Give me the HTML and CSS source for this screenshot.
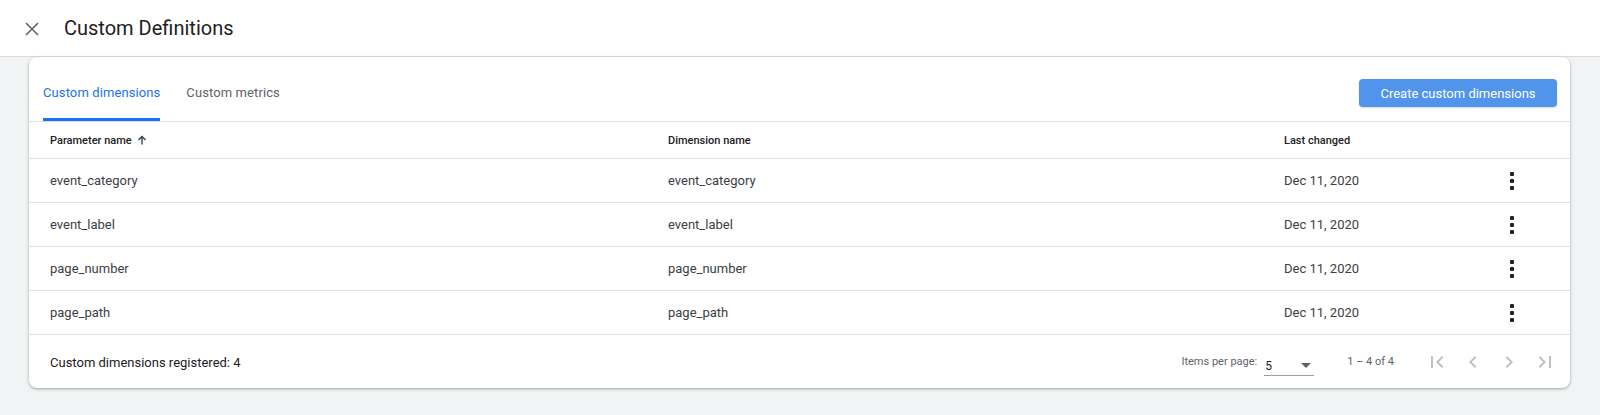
FILE: index.html
```html
<!DOCTYPE html>
<html>
<head>
<meta charset="utf-8">
<link rel="stylesheet" href="styles.css">
</head>
<body>
<header class="topbar">
  <button class="close" aria-label="Close">
    <svg width="14" height="14" viewBox="0 0 14 14"><path d="M1 1L13 13M13 1L1 13" stroke="#5f6368" stroke-width="1.6" fill="none"/></svg>
  </button>
  <h1 class="title">Custom Definitions</h1>
</header>
<main class="content">
  <section class="card">
    <div class="tabbar">
      <div class="tabs">
        <div class="tab active"><span>Custom dimensions</span></div>
        <div class="tab"><span>Custom metrics</span></div>
      </div>
      <button class="primary">Create custom dimensions</button>
    </div>
    <div class="table">
      <div class="row head">
        <div class="c1">Parameter name <svg class="sort" width="10" height="10" viewBox="0 0 10 10"><path d="M5 9.5V1.5M1.5 5L5 1.5L8.5 5" stroke="#3c4043" stroke-width="1.4" fill="none"/></svg></div>
        <div class="c2">Dimension name</div>
        <div class="c3">Last changed</div>
        <div class="c4"></div>
      </div>
      <div class="row">
        <div class="c1">event_category</div>
        <div class="c2">event_category</div>
        <div class="c3">Dec 11, 2020</div>
        <div class="c4"><span class="kebab"><i></i><i></i><i></i></span></div>
      </div>
      <div class="row">
        <div class="c1">event_label</div>
        <div class="c2">event_label</div>
        <div class="c3">Dec 11, 2020</div>
        <div class="c4"><span class="kebab"><i></i><i></i><i></i></span></div>
      </div>
      <div class="row">
        <div class="c1">page_number</div>
        <div class="c2">page_number</div>
        <div class="c3">Dec 11, 2020</div>
        <div class="c4"><span class="kebab"><i></i><i></i><i></i></span></div>
      </div>
      <div class="row">
        <div class="c1">page_path</div>
        <div class="c2">page_path</div>
        <div class="c3">Dec 11, 2020</div>
        <div class="c4"><span class="kebab"><i></i><i></i><i></i></span></div>
      </div>
    </div>
    <div class="footer">
      <div class="count">Custom dimensions registered: 4</div>
      <div class="paginator">
        <span class="ipp">Items per page:</span>
        <div class="select"><span>5</span><svg width="10" height="5" viewBox="0 0 10 5"><path d="M0 0H10L5 5Z" fill="#5f6368"/></svg></div>
        <span class="range">1 – 4 of 4</span>
        <div class="navs">
          <span class="nav"><svg width="24" height="24" viewBox="0 0 24 24"><path d="M18.41 16.59L13.82 12l4.59-4.59L17 6l-6 6 6 6zM6 6h2v12H6z" fill="#bdc1c6"/></svg></span>
          <span class="nav"><svg width="24" height="24" viewBox="0 0 24 24"><path d="M15.41 7.41L14 6l-6 6 6 6 1.41-1.41L10.83 12z" fill="#bdc1c6"/></svg></span>
          <span class="nav"><svg width="24" height="24" viewBox="0 0 24 24"><path d="M10 6L8.59 7.41 13.17 12l-4.58 4.59L10 18l6-6z" fill="#bdc1c6"/></svg></span>
          <span class="nav"><svg width="24" height="24" viewBox="0 0 24 24"><path d="M5.59 7.41L10.18 12l-4.59 4.59L7 18l6-6-6-6zM16 6h2v12h-2z" fill="#bdc1c6"/></svg></span>
        </div>
      </div>
    </div>
  </section>
</main>
</body>
</html>
```

FILE: styles.css
```css
* { box-sizing: border-box; }
html, body { margin: 0; padding: 0; }
body {
  background: #f1f3f4;
  font-family: Roboto, "Liberation Sans", Arial, sans-serif;
  color: #3c4043;
  height: 415px;
  overflow: hidden;
}
.topbar {
  height: 57px;
  background: #fff;
  border-bottom: 1px solid #dadce0;
  display: flex;
  align-items: center;
}
.close {
  width: 40px;
  height: 40px;
  margin-left: 12px;
  border: 0;
  background: none;
  padding: 0;
  display: flex;
  align-items: center;
  justify-content: center;
  margin-top: 2px;
}
.title {
  margin: 0 0 0 12px;
  font-size: 20px;
  font-weight: 400;
  color: #202124;
  letter-spacing: 0;
}
.content {
  padding: 0 30px 0 29px;
}
.card {
  background: #fff;
  border-radius: 8px;
  box-shadow: 0 1px 2px rgba(60,64,67,0.3), 0 1px 3px 1px rgba(60,64,67,0.12);
}
.tabbar {
  height: 65px;
  border-bottom: 1px solid #e0e0e0;
  display: flex;
  align-items: flex-end;
  justify-content: space-between;
  padding-left: 14px;
}
.tabs { display: flex; gap: 26px; }
.tab {
  height: 48px;
  padding: 12px 0 0;
  font-size: 13px;
  color: #5f6368;
  border-bottom: 3px solid transparent;
  letter-spacing: 0.1px;
}
.tab.active {
  color: #1a73e8;
  border-bottom-color: #1a73e8;
  border-radius: 2px 2px 0 0;
}
.primary {
  align-self: flex-start;
  margin-top: 22px;
  margin-right: 13px;
  width: 198px;
  height: 28px;
  border: 0;
  border-radius: 4px;
  background: #5194ec;
  color: #fff;
  font-family: inherit;
  font-size: 13px;
  letter-spacing: 0;
  box-shadow: 0 1px 2px rgba(60,64,67,0.2);
}
.row {
  display: flex;
  align-items: center;
  height: 44px;
  border-bottom: 1px solid #e0e0e0;
  padding-left: 21px;
  font-size: 13px;
  color: #3c4043;
}
.row.head {
  height: 37px;
  font-size: 11px;
  font-weight: 500;
  color: #202124;
}
.c1 { width: 618px; display: flex; align-items: center; }
.c2 { width: 616px; }
.c3 { width: 216px; }
.c4 { width: 24px; display: flex; justify-content: center; }
.sort { margin-left: 5px; }
.kebab {
  display: flex;
  flex-direction: column;
  gap: 3px;
  margin-top: 1px;
}
.kebab i {
  display: block;
  width: 4px;
  height: 4px;
  background: #202124;
  border-radius: 1px;
}
.footer {
  height: 53px;
  display: flex;
  align-items: center;
  justify-content: space-between;
  padding-left: 21px;
  font-size: 13px;
  color: #202124;
}
.count { margin-top: 2px; }
.paginator {
  display: flex;
  align-items: center;
  font-size: 11px;
  color: #5f6368;
  margin-right: 7px;
}
.ipp { margin-right: 7px; }
.select {
  width: 50px;
  height: 22px;
  border-bottom: 1px solid #9aa0a6;
  display: flex;
  align-items: center;
  justify-content: space-between;
  padding: 4px 3px 0 1px;
  font-size: 12px;
  color: #202124;
  margin-top: 6px;
}
.select svg { margin-top: -2px; }
.range { margin-left: 33px; margin-right: 25px; }
.navs { display: flex; }
.nav {
  width: 36px;
  height: 36px;
  display: flex;
  align-items: center;
  justify-content: center;
}
```
